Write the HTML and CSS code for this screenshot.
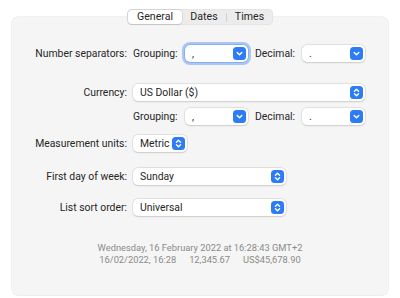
FILE: index.html
```html
<!DOCTYPE html>
<html>
<head>
<meta charset="utf-8">
<link rel="stylesheet" href="styles.css">
</head>
<body>
<div class="page">
  <div class="tabs">
    <div class="tab selected">General</div>
    <div class="tab">Dates</div>
    <div class="sep"></div>
    <div class="tab">Times</div>
  </div>
  <div class="box">
    <div class="row r1">
      <div class="label">Number separators:</div>
      <div class="controls">
        <span class="sublabel">Grouping:</span>
        <div class="popup small focus"><span class="val">,</span><span class="btn"><svg viewBox="0 0 14 14"><path d="M4.5 5.8 L7 8.3 L9.5 5.8" /></svg></span></div>
        <span class="sublabel dec">Decimal:</span>
        <div class="popup small"><span class="val">.</span><span class="btn"><svg viewBox="0 0 14 14"><path d="M4.5 5.8 L7 8.3 L9.5 5.8" /></svg></span></div>
      </div>
    </div>
    <div class="row r2">
      <div class="label">Currency:</div>
      <div class="controls">
        <div class="popup wide"><span class="val">US Dollar ($)</span><span class="btn"><svg viewBox="0 0 14 14"><path d="M4.8 5.6 L7 3.5 L9.2 5.6 M4.8 8.4 L7 10.5 L9.2 8.4" /></svg></span></div>
      </div>
    </div>
    <div class="row r3">
      <div class="label"></div>
      <div class="controls">
        <span class="sublabel">Grouping:</span>
        <div class="popup small"><span class="val">,</span><span class="btn"><svg viewBox="0 0 14 14"><path d="M4.5 5.8 L7 8.3 L9.5 5.8" /></svg></span></div>
        <span class="sublabel dec">Decimal:</span>
        <div class="popup small"><span class="val">.</span><span class="btn"><svg viewBox="0 0 14 14"><path d="M4.5 5.8 L7 8.3 L9.5 5.8" /></svg></span></div>
      </div>
    </div>
    <div class="row r4">
      <div class="label">Measurement units:</div>
      <div class="controls">
        <div class="popup metric"><span class="val">Metric</span><span class="btn"><svg viewBox="0 0 14 14"><path d="M4.8 5.6 L7 3.5 L9.2 5.6 M4.8 8.4 L7 10.5 L9.2 8.4" /></svg></span></div>
      </div>
    </div>
    <div class="row r5">
      <div class="label">First day of week:</div>
      <div class="controls">
        <div class="popup medium"><span class="val">Sunday</span><span class="btn"><svg viewBox="0 0 14 14"><path d="M4.8 5.6 L7 3.5 L9.2 5.6 M4.8 8.4 L7 10.5 L9.2 8.4" /></svg></span></div>
      </div>
    </div>
    <div class="row r6">
      <div class="label">List sort order:</div>
      <div class="controls">
        <div class="popup medium"><span class="val">Universal</span><span class="btn"><svg viewBox="0 0 14 14"><path d="M4.8 5.6 L7 3.5 L9.2 5.6 M4.8 8.4 L7 10.5 L9.2 8.4" /></svg></span></div>
      </div>
    </div>
    <div class="footer">
      <div>Wednesday, 16 February 2022 at 16:28:43 GMT+2</div>
      <div class="f2"><span>16/02/2022, 16:28</span><span>12,345.67</span><span>US$45,678.90</span></div>
    </div>
  </div>
</div>
</body>
</html>
```
FILE: styles.css
```css
html, body {
  margin: 0;
  padding: 0;
  background: #ffffff;
}
body {
  width: 400px;
  height: 298px;
  overflow: hidden;
  font-family: Roboto, "Liberation Sans", sans-serif;
  font-size: 10.4px;
  color: #262626;
}
.page {
  padding: 9px 12px 0 12px;
}
.tabs {
  position: relative;
  z-index: 2;
  margin: 0 auto -8px auto;
  width: 146px;
  height: 16px;
  box-sizing: border-box;
  display: flex;
  align-items: center;
  background: #ececec;
  border-radius: 5px;
  padding: 0 1px;
  box-shadow: inset 0 0 0 0.5px #dcdcdc;
}
.tab {
  height: 14px;
  line-height: 14px;
  font-size: 10.6px;
  color: #262626;
  text-align: center;
}
.tab.selected {
  width: 54px;
  background: #ffffff;
  border-radius: 4px;
  box-shadow: 0 0 0 0.5px #c8c8c8, 0 0.5px 1px rgba(0,0,0,0.15);
}
.tab:nth-child(2) {
  width: 44px;
}
.sep {
  width: 1px;
  height: 9px;
  background: #d0d0d0;
}
.tab:last-child {
  flex: 1;
}
.box {
  height: 278px;
  box-sizing: border-box;
  background: #f5f5f5;
  border-radius: 6px;
  box-shadow: 0 0 0 0.5px #e4e4e4, 0 1px 1px rgba(0,0,0,0.04);
  padding-top: 28px;
  display: flex;
  flex-direction: column;
}
.row {
  display: flex;
  align-items: center;
  height: 17px;
}
.r2 { margin-top: 22px; }
.r3 { margin-top: 7px; }
.r4 { margin-top: 10px; }
.r5 { margin-top: 16px; }
.r6 { margin-top: 14px; }
.label {
  width: 115px;
  text-align: right;
  white-space: nowrap;
  flex: none;
}
.controls {
  margin-left: 6px;
  display: flex;
  align-items: center;
}
.sublabel {
  width: 52px;
  white-space: nowrap;
}
.sublabel.dec {
  width: 47px;
  margin-left: 7px;
}
.popup {
  height: 17px;
  box-sizing: border-box;
  background: #ffffff;
  border-radius: 5px;
  box-shadow: 0 0 0 0.5px #d4d4d4, 0 0.5px 1.5px rgba(0,0,0,0.18);
  display: flex;
  align-items: center;
  justify-content: space-between;
  padding: 0 2px 0 7px;
}
.popup.focus {
  box-shadow: 0 0 0 0.5px #6a9ae8, 0 0 0 3px #a9c6f5;
}
.small { width: 63px; }
.wide { width: 232px; }
.metric { width: 54px; }
.medium { width: 153px; }
.val {
  white-space: nowrap;
}
.btn {
  width: 13px;
  height: 13px;
  border-radius: 3.5px;
  background: #2d7cf6;
  display: flex;
}
.btn svg {
  width: 13px;
  height: 13px;
}
.btn path {
  fill: none;
  stroke: #ffffff;
  stroke-width: 1.5;
  stroke-linecap: round;
  stroke-linejoin: round;
}
.footer {
  margin-top: 26px;
  text-align: center;
  color: #8a8a8a;
  font-size: 9.3px;
  line-height: 12px;
}
.f2 {
  display: flex;
  justify-content: center;
  gap: 13px;
}
```
